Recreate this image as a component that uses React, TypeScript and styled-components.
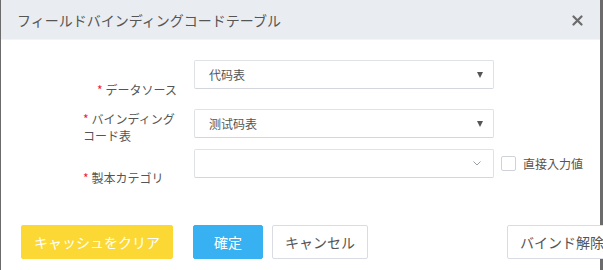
import styled, { createGlobalStyle } from "styled-components";

const GlobalStyle = createGlobalStyle`
    html, body {
        margin: 0;
        padding: 0;
        overflow: hidden;
        background-color: #6b6b6b;
    }
    body {
        font-family: "Noto Sans CJK JP", "Noto Sans CJK SC", "Noto Sans", sans-serif;
        color: #555;
    }
`;

const Modal = styled.div`
    margin-left: 1px;
    width: 599px;
    height: 270px;
    background-color: #fff;
    position: relative;
`;

const Header = styled.div`
    height: 39px;
    background-color: #e9ecf0;
    border-bottom: 1px solid #f3f4f6;
    display: flex;
    align-items: center;
    justify-content: space-between;
    padding: 0 17px 0 16px;
    box-sizing: content-box;
`;

const Title = styled.h4`
    margin: 0;
    font-size: 14px;
    font-weight: 400;
    line-height: 20px;
    color: #555;
`;

const CloseIcon = styled.svg`
    width: 11px;
    height: 11px;
    margin-top: 1px;
    cursor: pointer;
`;

const Form = styled.div`
    padding: 20px 0 0 82px;
    display: grid;
    grid-template-rows: 49px 40px 38px;
`;

const Row = styled.div`
    display: flex;
    align-items: flex-start;
`;

const FieldLabel = styled.label<{ $top: number; $align: "left" | "right" }>`
    width: 94px;
    flex-shrink: 0;
    padding-top: ${(p) => p.$top}px;
    margin-right: 17px;
    font-size: 12px;
    line-height: 17px;
    color: #555;
    text-align: ${(p) => p.$align};
`;

const Required = styled.span`
    color: #f0203a;
    font-size: 12px;
    margin-right: 3px;
`;

const SelectBox = styled.div`
    width: 300px;
    height: 29px;
    box-sizing: border-box;
    border: 1px solid #dfe2e7;
    border-bottom-color: #d3d7dd;
    border-radius: 2px;
    display: flex;
    align-items: center;
    justify-content: space-between;
    padding: 0 9px 0 14px;
    font-size: 12px;
    color: #555;
    background-color: #fff;
`;

const Caret = styled.span`
    width: 0;
    height: 0;
    border-left: 3px solid transparent;
    border-right: 3px solid transparent;
    border-top: 6px solid #555;
    margin-right: 1px;
`;

const Chevron = styled.svg`
    width: 8px;
    height: 5px;
    margin-right: 3px;
`;

const CheckLabel = styled.label`
    display: flex;
    align-items: center;
    margin-left: 7px;
    height: 29px;
    font-size: 12px;
    color: #555;
    gap: 7px;
`;

const CheckBox = styled.span`
    width: 15px;
    height: 15px;
    box-sizing: border-box;
    border: 1px solid #cfd3d9;
    border-radius: 2px;
    background-color: #fff;
`;

const Footer = styled.div`
    display: flex;
    align-items: center;
    padding: 38px 0 0 20px;
`;

const Button = styled.button<{ $variant: "warn" | "primary" | "plain" }>`
    height: 34px;
    box-sizing: border-box;
    padding: 0 12px;
    border-radius: 2px;
    font-family: inherit;
    font-size: 14px;
    line-height: 20px;
    text-align: center;
    white-space: nowrap;
    flex-shrink: 0;
    cursor: pointer;
    position: relative;
    z-index: 1;
    border: 1px solid
        ${(p) =>
            p.$variant === "warn"
                ? "#fcd835"
                : p.$variant === "primary"
                ? "#37b1f2"
                : "#d9dde3"};
    background-color: ${(p) =>
        p.$variant === "warn"
            ? "#fcd835"
            : p.$variant === "primary"
            ? "#37b1f2"
            : "#fff"};
    color: ${(p) => (p.$variant === "plain" ? "#555" : "#fff")};
`;

const ClearButton = styled(Button)`
    width: 152px;
    padding: 0;
`;

const ConfirmButton = styled(Button)`
    width: 70px;
    padding: 0;
    margin-left: 20px;
`;

const CancelButton = styled(Button)`
    width: 96px;
    padding: 0;
    margin-left: 9px;
`;

const UnbindButton = styled(Button)`
    margin-left: 139px;
`;

export default function App() {
    return (
        <>
            <GlobalStyle />
            <Modal>
                <Header>
                    <Title>フィールドバインディングコードテーブル</Title>
                    <CloseIcon viewBox="0 0 11 11">
                        <path
                            d="M1.5 1.5 L9.5 9.5 M9.5 1.5 L1.5 9.5"
                            stroke="#6b6b6b"
                            strokeWidth="2.2"
                            strokeLinecap="round"
                        />
                    </CloseIcon>
                </Header>
                <Form>
                    <Row>
                        <FieldLabel $top={21} $align="right">
                            <Required>*</Required>データソース
                        </FieldLabel>
                        <SelectBox>
                            代码表
                            <Caret />
                        </SelectBox>
                    </Row>
                    <Row>
                        <FieldLabel $top={1} $align="left">
                            <Required>*</Required>バインディングコード表
                        </FieldLabel>
                        <SelectBox>
                            测试码表
                            <Caret />
                        </SelectBox>
                    </Row>
                    <Row>
                        <FieldLabel $top={20} $align="left">
                            <Required>*</Required>製本カテゴリ
                        </FieldLabel>
                        <SelectBox>
                            <span />
                            <Chevron viewBox="0 0 8 5">
                                <path
                                    d="M0.5 0.5 L4 4 L7.5 0.5"
                                    fill="none"
                                    stroke="#9aa0a8"
                                    strokeWidth="1"
                                />
                            </Chevron>
                        </SelectBox>
                        <CheckLabel>
                            <CheckBox />
                            直接入力値
                        </CheckLabel>
                    </Row>
                </Form>
                <Footer>
                    <ClearButton $variant="warn">キャッシュをクリア</ClearButton>
                    <ConfirmButton $variant="primary">確定</ConfirmButton>
                    <CancelButton $variant="plain">キャンセル</CancelButton>
                    <UnbindButton $variant="plain">バインド解除</UnbindButton>
                </Footer>
            </Modal>
        </>
    );
}
